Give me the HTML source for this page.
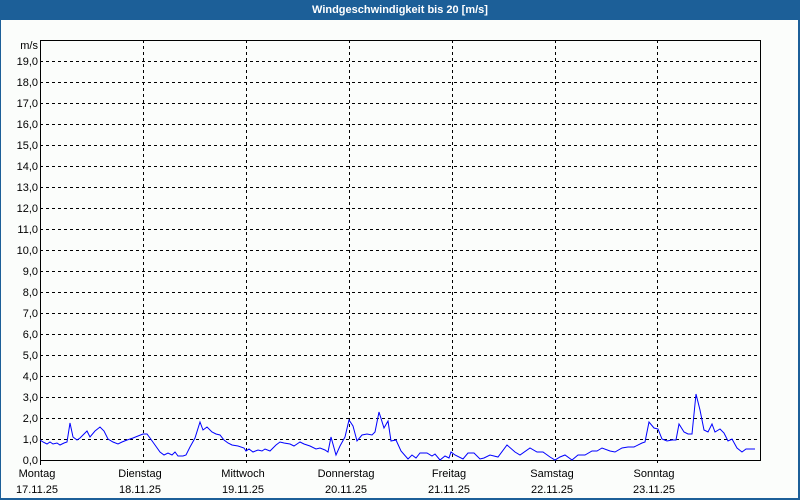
<!DOCTYPE html>
<html><head><meta charset="utf-8"><style>
html,body{margin:0;padding:0;width:800px;height:500px;overflow:hidden;background:#1c5f98}
svg{display:block}
text{font-family:"Liberation Sans",sans-serif;font-size:11px;fill:#000}
</style></head><body>
<svg width="800" height="500" viewBox="0 0 800 500" xmlns="http://www.w3.org/2000/svg">
<rect x="0" y="0" width="800" height="500" fill="#1c5f98"/>
<rect x="1" y="20" width="797" height="478" fill="#fbfdfb"/>
<text x="400" y="13" text-anchor="middle" style="font-weight:bold;fill:#fff;font-size:11px">Windgeschwindigkeit bis 20 [m/s]</text>
<g stroke="#000" stroke-width="1" stroke-dasharray="3,3" fill="none" shape-rendering="crispEdges">
<path d="M40 61.5H760M40 82.5H760M40 103.5H760M40 124.5H760M40 145.5H760M40 166.5H760M40 187.5H760M40 208.5H760M40 229.5H760M40 250.5H760M40 271.5H760M40 292.5H760M40 313.5H760M40 334.5H760M40 355.5H760M40 376.5H760M40 397.5H760M40 418.5H760M40 439.5H760"/>
<path d="M143.5 40V465M246.5 40V465M349.5 40V465M452.5 40V465M555.5 40V465M657.5 40V465"/>
</g>
<path d="M40.5 465V40.5H760.5V460.5H40" stroke="#000" stroke-width="1" fill="none" shape-rendering="crispEdges"/>
<g text-anchor="end">
<text x="38" y="49">m/s</text>
<text x="38" y="65">19,0</text><text x="38" y="86">18,0</text><text x="38" y="107">17,0</text><text x="38" y="128">16,0</text><text x="38" y="149">15,0</text><text x="38" y="170">14,0</text><text x="38" y="191">13,0</text><text x="38" y="212">12,0</text><text x="38" y="233">11,0</text><text x="38" y="254">10,0</text><text x="38" y="275">9,0</text><text x="38" y="296">8,0</text><text x="38" y="317">7,0</text><text x="38" y="338">6,0</text><text x="38" y="359">5,0</text><text x="38" y="380">4,0</text><text x="38" y="401">3,0</text><text x="38" y="422">2,0</text><text x="38" y="443">1,0</text><text x="38" y="464">0,0</text>
</g>
<g text-anchor="middle">
<text x="37" y="477">Montag</text><text x="37" y="493">17.11.25</text>
<text x="140" y="477">Dienstag</text><text x="140" y="493">18.11.25</text>
<text x="243" y="477">Mittwoch</text><text x="243" y="493">19.11.25</text>
<text x="346" y="477">Donnerstag</text><text x="346" y="493">20.11.25</text>
<text x="449" y="477">Freitag</text><text x="449" y="493">21.11.25</text>
<text x="552" y="477">Samstag</text><text x="552" y="493">22.11.25</text>
<text x="654" y="477">Sonntag</text><text x="654" y="493">23.11.25</text>
</g>
<polyline fill="none" stroke="#0000ff" stroke-width="1" points="40,440 43,442 47,444 50,442 53,444 57,443 60,445 64,443 67,442 70,423 73,437 77,440 80,438 84,434 87,431 90,437 95,431 100,427 104,431 108,439 113,442 118,444 122,442 127,440 133,438 138,436 143,434 147,434 150,438 155,445 160,452 164,455 168,453 172,455 175,452 178,456 183,456 186,455 190,447 195,438 200,422 203,430 207,427 212,432 216,434 220,435 224,440 228,443 232,445 238,446 244,448 246,451 249,449 253,452 258,450 262,451 265,449 270,451 276,445 280,442 284,443 290,444 294,446 297,444 300,442 304,444 310,446 316,449 320,448 325,450 328,452 331,437 336,455 340,446 345,437 349,420 353,426 357,441 362,435 367,434 372,435 375,432 379,412 384,428 388,421 391,441 396,440 401,451 408,459 412,455 416,458 420,453 427,453 432,456 435,454 440,460 445,456 449,458 451,452 455,455 463,459 468,453 474,453 480,459 484,458 490,455 498,457 507,445 515,452 520,455 530,448 537,452 543,452 550,457 555,460 560,457 565,455 572,460 578,455 585,455 592,451 597,451 602,448 610,451 615,452 622,448 628,447 634,447 642,443 645,442 649,422 654,428 658,429 662,439 667,441 672,440 676,440 679,424 684,432 688,434 692,434 696,394 700,410 704,430 708,432 712,424 715,432 720,429 724,433 728,441 732,439 737,448 742,452 746,449 755,449"/>
</svg>
</body></html>
